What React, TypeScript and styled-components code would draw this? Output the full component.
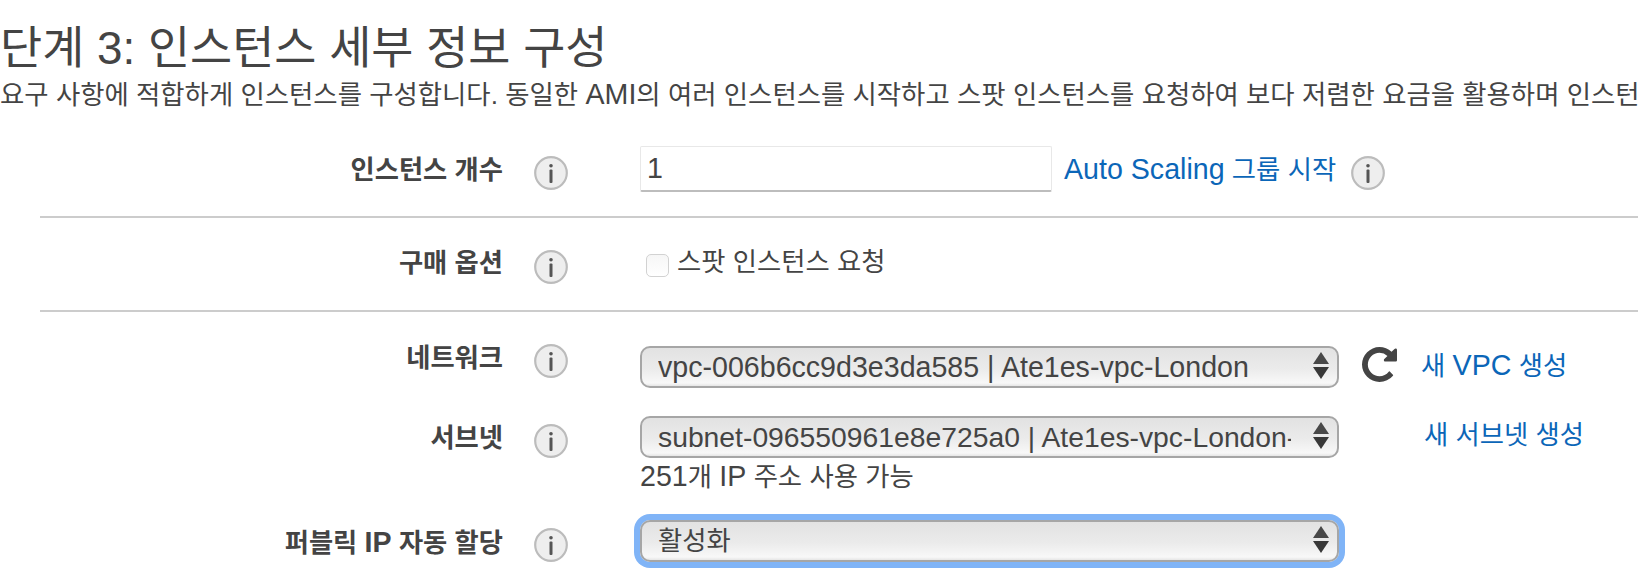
import React from "react";
import styled, { createGlobalStyle } from "styled-components";

const GlobalStyle = createGlobalStyle`
  html, body {
    margin: 0;
    background: #fff;
    overflow: hidden;
  }
  body {
    font-family: "Liberation Sans", "Noto Sans CJK KR", sans-serif;
    color: #444;
  }
`;

const Page = styled.div`
  width: 1638px;
  height: 580px;
  overflow: hidden;
`;

const Header = styled.header`
  padding-top: 24px;
  height: 86px;
`;

const Title = styled.h1`
  margin: 0;
  font-size: 45.8px;
  font-weight: 400;
  line-height: 50px;
  white-space: nowrap;
`;

const Subtitle = styled.p`
  margin: 6px 0 0;
  font-size: 26.4px;
  line-height: 30px;
  white-space: nowrap;
`;

// Latin runs sit a little larger than the hangul around them
const Latin = styled.span`
  font-size: 28.6px;
  line-height: 1;
`;

const Section = styled.section<{ $top: number; $bottom: number; $line?: boolean }>`
  margin-left: 40px;
  padding-top: ${(p) => p.$top}px;
  padding-bottom: ${(p) => p.$bottom}px;
  border-bottom: ${(p) => (p.$line ? "2px solid #ccc" : "none")};
  display: flex;
  flex-direction: column;
  gap: 28px;
`;

const Row = styled.div`
  display: grid;
  grid-template-columns: 463px 137px 1fr;
  align-items: start;
`;

const Label = styled.label<{ $offset: number }>`
  margin-top: ${(p) => p.$offset}px;
  font-size: 26.3px;
  font-weight: 700;
  line-height: 30px;
  text-align: right;
  white-space: nowrap;
`;

const InfoWrap = styled.span<{ $offset: number; $left?: number }>`
  display: block;
  width: 34px;
  height: 34px;
  flex: none;
  margin-top: ${(p) => p.$offset}px;
  margin-left: ${(p) => p.$left ?? 0}px;
  filter: blur(0.4px);
`;

const Control = styled.div`
  display: flex;
  align-items: flex-start;
  min-width: 0;
`;

const Stack = styled.div`
  display: flex;
  flex-direction: column;
`;

const CountInput = styled.input`
  box-sizing: border-box;
  width: 412px;
  height: 46px;
  padding: 0 6px;
  border: 1px solid #e8e8e8;
  border-bottom: 2px solid #bdbdbd;
  border-radius: 2px;
  outline: none;
  font: 400 28.6px "Liberation Sans", sans-serif;
  color: #444;
`;

const LinkText = styled.a<{ $offset: number; $left: number }>`
  margin-top: ${(p) => p.$offset}px;
  margin-left: ${(p) => p.$left}px;
  font-size: 26.35px;
  line-height: 30px;
  color: #0b66b8;
  white-space: nowrap;
  cursor: pointer;
`;

const Spot = styled.label`
  display: flex;
  align-items: flex-start;
  gap: 8px;
  margin-left: 6px;
  font-size: 26.35px;
  line-height: 30px;
`;

const Check = styled.input`
  appearance: none;
  box-sizing: border-box;
  width: 23px;
  height: 23px;
  margin: 7px 0 0;
  border: 1px solid #d2d2d2;
  border-radius: 5px;
  background: linear-gradient(#f6f6f6, #fff);
`;

const SelectBox = styled.div`
  position: relative;
  width: 699px;
  height: 42px;
  flex: none;
`;

const Select = styled.select<{ $focused?: boolean; $size: number }>`
  appearance: none;
  box-sizing: border-box;
  display: block;
  width: 100%;
  height: 100%;
  padding: 0 46px 0 16px;
  border: 2px solid #a6a6a6;
  border-radius: 10px;
  outline: none;
  background: linear-gradient(#e2e2e2 0%, #ebebeb 55%, #f8f8f8 92%, #e6e6e6 100%);
  font: 400 ${(p) => p.$size}px "Liberation Sans", "Noto Sans CJK KR", sans-serif;
  color: #444;
  box-shadow: ${(p) => (p.$focused ? "0 0 0 6px #80b4f7" : "none")};
`;

const Stepper = styled.svg`
  position: absolute;
  top: 6px;
  right: 10px;
  width: 16px;
  height: 27px;
  pointer-events: none;
`;

const RefreshIcon = styled.svg`
  flex: none;
  width: 35px;
  height: 35px;
  margin: 1px 0 0 23px;
  fill: #444;
  filter: blur(0.4px);
`;

const Hint = styled.div`
  margin-top: 4px;
  font-size: 26.35px;
  line-height: 30px;
  white-space: nowrap;
`;

const Info = ({ offset, left }: { offset: number; left?: number }) => (
  <InfoWrap $offset={offset} $left={left}>
    <svg width="34" height="34" viewBox="0 0 34 34">
      <circle cx="17" cy="17" r="15.8" fill="#eeeeee" stroke="#bcbcbc" strokeWidth="2.2" />
      <circle cx="17" cy="9.8" r="1.8" fill="#555" />
      <rect x="15.5" y="13.5" width="3" height="13.5" rx="1" fill="#555" />
    </svg>
  </InfoWrap>
);

const Dropdown = ({ value, focused, size = 28.6 }: { value: string; focused?: boolean; size?: number }) => (
  <SelectBox>
    <Select $focused={focused} $size={size} defaultValue={value}>
      <option>{value}</option>
    </Select>
    <Stepper viewBox="0 0 16 27">
      <polygon points="8,0 16,12 0,12" fill="#484848" />
      <polygon points="0,15 16,15 8,27" fill="#383838" />
    </Stepper>
  </SelectBox>
);

export default function App() {
  return (
    <Page>
      <GlobalStyle />
      <Header>
        <Title>단계 3: 인스턴스 세부 정보 구성</Title>
        <Subtitle>
          요구 사항에 적합하게 인스턴스를 구성합니다. 동일한 <Latin>AMI</Latin>의 여러 인스턴스를
          시작하고 스팟 인스턴스를 요청하여 보다 저렴한 요금을 활용하며 인스턴스에 액세스 관리 역할을
          할당하는 등 다양한 기능을 사용할 수 있습니다.
        </Subtitle>
      </Header>

      <Section $top={36} $bottom={24} $line>
        <Row>
          <Label $offset={9}>인스턴스 개수</Label>
          <Info offset={10} left={31} />
          <Control>
            <CountInput defaultValue="1" />
            <LinkText $offset={9} $left={12}>
              <Latin>Auto Scaling</Latin> 그룹 시작
            </LinkText>
            <Info offset={10} left={15} />
          </Control>
        </Row>
      </Section>

      <Section $top={29} $bottom={26} $line>
        <Row>
          <Label $offset={1}>구매 옵션</Label>
          <Info offset={3} left={31} />
          <Spot>
            <Check type="checkbox" />
            스팟 인스턴스 요청
          </Spot>
        </Row>
      </Section>

      <Section $top={34} $bottom={0}>
        <Row>
          <Label $offset={-3}>네트워크</Label>
          <Info offset={-2} left={31} />
          <Control>
            <Dropdown value="vpc-006b6cc9d3e3da585 | Ate1es-vpc-London" />
            <RefreshIcon viewBox="128 128 1536 1536">
              <path d="M1664 256v448q0 26-19 45t-45 19h-448q-42 0-59-40-17-39 14-69l138-138q-148-137-349-137-104 0-198.5 40.5t-163.5 109.5-109.5 163.5-40.5 198.5 40.5 198.5 109.5 163.5 163.5 109.5 198.5 40.5q119 0 225-52t179-147q7-10 23-12 15 0 25 9l137 138q9 8 9.5 20.5t-7.5 22.5q-109 132-264 204.5t-327 72.5q-156 0-298-61t-245-164-164-245-61-298 61-298 164-245 245-164 298-61q147 0 284.5 55.5t244.5 156.5l130-129q29-31 70-14 39 17 39 59z" />
            </RefreshIcon>
            <LinkText $offset={5} $left={24}>
              새 <Latin>VPC</Latin> 생성
            </LinkText>
          </Control>
        </Row>
        <Row>
          <Label $offset={7}>서브넷</Label>
          <Info offset={8} left={31} />
          <Stack>
            <Control>
              <Dropdown value="subnet-096550961e8e725a0 | Ate1es-vpc-London-subnet" size={28.3} />
              <LinkText $offset={4} $left={85}>새 서브넷 생성</LinkText>
            </Control>
            <Hint>
              <Latin>251</Latin>개 <Latin>IP</Latin> 주소 사용 가능
            </Hint>
          </Stack>
        </Row>
        <Row>
          <Label $offset={8}>
            퍼블릭 <Latin>IP</Latin> 자동 할당
          </Label>
          <Info offset={8} left={31} />
          <Control>
            <Dropdown value="활성화" size={26.35} focused />
          </Control>
        </Row>
      </Section>
    </Page>
  );
}
